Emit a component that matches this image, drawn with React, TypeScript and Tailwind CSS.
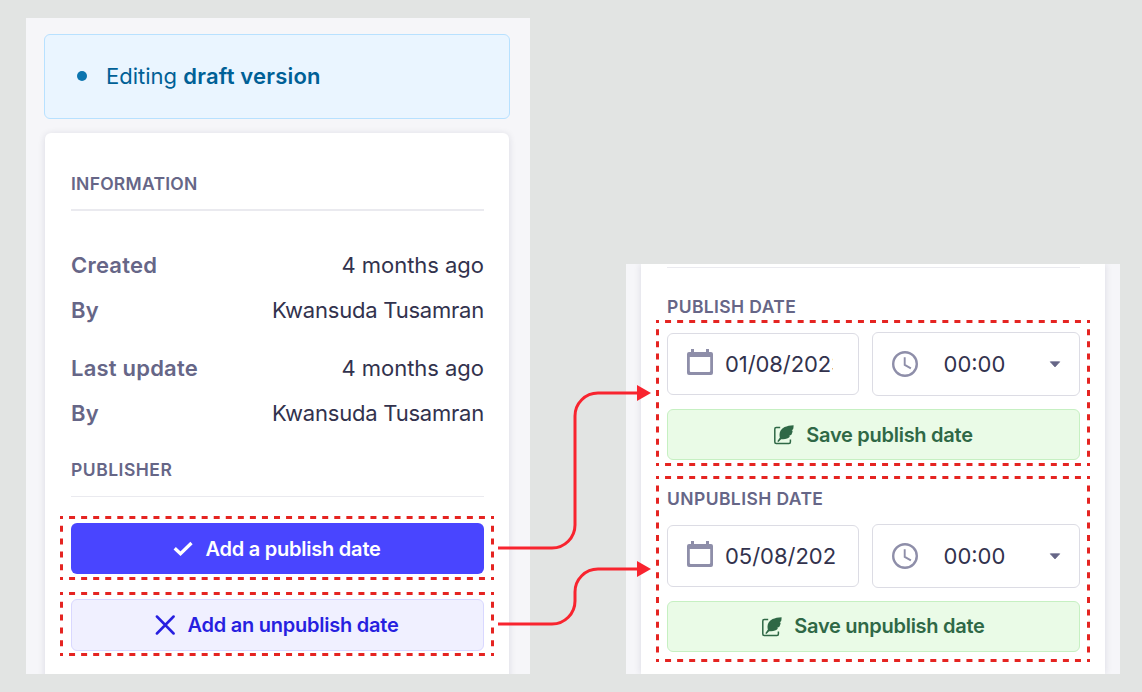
import React from "react";

function DashedBox({ w, h, className }: { w: number; h: number; className: string }) {
  const px = w / Math.round(w / 12);
  const py = h / Math.round(h / 12 - 0.01);
  const dx = `6 ${px - 6}`;
  const dy = `6 ${py - 6}`;
  return (
    <svg width={w} height={h} viewBox={`0 0 ${w} ${h}`} className={`pointer-events-none absolute ${className}`} stroke="#e52421" strokeWidth="3" fill="none">
      <path d={`M0 1.5H${w}`} strokeDasharray={dx} strokeDashoffset="3" />
      <path d={`M0 ${h - 1.5}H${w}`} strokeDasharray={dx} strokeDashoffset="3" />
      <path d={`M1.5 0V${h}`} strokeDasharray={dy} strokeDashoffset="3" />
      <path d={`M${w - 1.5} 0V${h}`} strokeDasharray={dy} strokeDashoffset="3" />
    </svg>
  );
}

const Calendar = () => (
  <svg width="26" height="26" viewBox="0 0 26 26" className="block shrink-0">
    <path fill="#8e8ea9" fillRule="evenodd" d="M4 0h3v3h12V0h3v3h2a2 2 0 0 1 2 2v19a2 2 0 0 1-2 2H2a2 2 0 0 1-2-2V5a2 2 0 0 1 2-2h2V0ZM2.8 8v13.800c0 .8.5 1.3 1.3 1.300h17.800c.8 0 1.3-.5 1.3-1.300V8H2.800Z" />
  </svg>
);

const Clock = () => (
  <svg width="26" height="26" viewBox="0 0 26 26" fill="none" stroke="#8e8ea9" className="block shrink-0">
    <circle cx="13" cy="13" r="11.8" strokeWidth="2.4" />
    <path d="M12.7 6.3v7.600l6.200 3.500" strokeWidth="1.9" />
  </svg>
);

const Feather = () => (
  <svg width="20" height="20" viewBox="0 0 20 20" className="block shrink-0">
    <path d="M6.200 2.500H2.200Q.8 2.500.8 3.900v13q0 1.500 1.400 1.500h12.800q1.400 0 1.400-1.500v-2.400" fill="none" stroke="#2f6846" strokeWidth="1.5" />
    <path d="M19.600.2C16 .4 13 1 10.600 2.100 7.200 3.800 5.600 6.500 5.500 9.500c0 1.200.1 2.200.4 3L3.300 16.200l1.100.8 2.700-2.800c3.700.6 6.900-.4 8.900-2.600l-1-.5 2.400-1.400c.8-1.500 1.200-2.800 1.300-3.900l-1-.3 1.500-1.500c.3-1.200.4-2.300.4-3.800Z" fill="#2f6846" />
  </svg>
);

const Info = ({ label, value }: { label: string; value: string }) => (
  <div className="flex h-[27px] items-center justify-between text-[22px] leading-[27px]">
    <span className="font-semibold tracking-[0.210px] text-[#666687]">{label}</span>
    <span className={value.startsWith("K") ? "tracking-[-0.220px] text-[#32324d]" : "tracking-[-0.030px] text-[#32324d]"}>{value}</span>
  </div>
);

function DateFields({ date }: { date: string }) {
  return (
    <div className="flex h-16 items-center gap-[13px] text-[22px] text-[#32324d]">
      <div className="flex h-[62px] w-48 items-center rounded-md border border-[#dcdce4] bg-white pl-[19px]">
        <div className="-mt-1"><Calendar /></div>
        <span className={date.length > 9 ? "ml-3 w-[108px] overflow-hidden whitespace-nowrap tracking-[-0.080px]" : "ml-3 whitespace-nowrap tracking-[-0.020px]"}>{date}</span>
      </div>
      <div className="flex h-16 w-52 items-center rounded-md border border-[#dcdce4] bg-white px-[19px]">
        <Clock />
        <span className="ml-[25.500px]">00:00</span>
        <svg width="12" height="7" viewBox="0 0 12 7" className="-mr-px ml-auto"><path d="M1.300.8h9.400L6 5.900Z" fill="#666687" stroke="#666687" strokeWidth=".8" strokeLinejoin="round" /></svg>
      </div>
    </div>
  );
}

const SaveButton = ({ children }: { children: string }) => (
  <button className="flex h-[51px] w-[413px] items-center justify-center rounded-md border border-[#c6f0c2] bg-[#eafbe7] text-[20px] font-semibold tracking-[-0.270px] text-[#2f6846]">
    <Feather />
    <span className="ml-3">{children}</span>
  </button>
);

export default function App() {
  return (
    <main className="relative flex h-[692px] w-[1142px] overflow-hidden bg-[#e2e4e3] pl-[26px] pt-[18px] font-['Inter','Liberation_Sans',sans-serif]">
      <section className="h-[656px] w-[504px] overflow-hidden bg-[#f6f6f9] pl-[18px] pt-4">
        <div className="flex h-[85px] w-[466px] items-center rounded-md border border-[#b8e1ff] bg-[#eaf5ff] pl-8 text-[22px] text-[#006096]">
          <span className="-mt-px mr-[19px] h-[10px] w-[10px] rounded-full bg-[#0c75af]" />
          <span>Editing <b className="font-semibold tracking-[0.200px]">draft version</b></span>
        </div>
        <div className="ml-px mt-[14px] h-[560px] w-[464px] rounded-md bg-white pl-[26px] pr-[25px] shadow-[0_1px_7px_rgba(33,33,70,0.13)]">
          <h2 className="pt-[41px] text-[17.500px] font-semibold leading-5 tracking-[0.250px] text-[#666687]">INFORMATION</h2>
          <hr className="mt-[15px] border-0 border-t-2 border-[#eaeaef]" />
          <div className="mt-[41px]"><Info label="Created" value="4 months ago" /></div>
          <div className="mt-[18px]"><Info label="By" value="Kwansuda Tusamran" /></div>
          <div className="mt-[31px]"><Info label="Last update" value="4 months ago" /></div>
          <div className="mt-[18px]"><Info label="By" value="Kwansuda Tusamran" /></div>
          <h2 className="mt-[33px] text-[17.500px] font-semibold leading-5 tracking-[0.500px] text-[#666687]">PUBLISHER</h2>
          <hr className="mt-4 border-0 border-t border-[#eaeaef]" />
          <button className="mt-[26px] flex h-[51px] w-[413px] items-center justify-center rounded-md bg-[#4945ff] pr-px text-[20px] font-semibold tracking-[-0.230px] text-white">
            <svg width="20" height="16" viewBox="0 0 20 16" className="mr-3"><path d="m1.700 7.200 5.800 5.600L18.500 2" fill="none" stroke="currentColor" strokeWidth="3.300" /></svg>
            Add a publish date
          </button>
          <button className="mt-[25px] flex h-[52px] w-[413px] items-center justify-center rounded-md border border-[#d9d8ff] bg-[#f0f0ff] pr-px text-[20px] font-semibold tracking-[-0.240px] text-[#271fe0]">
            <svg width="20" height="20" viewBox="0 0 20 20" className="mr-3"><path d="m1.900 1.500 16.700 17m0-17L1.900 18.500" stroke="currentColor" strokeWidth="2.500" strokeLinecap="round" /></svg>
            Add an unpublish date
          </button>
        </div>
      </section>

      <section className="ml-24 mt-[246px] h-[410px] w-[494px] overflow-hidden bg-[#f6f6f9] pl-[15px]">
        <div className="h-[410px] w-[464px] bg-white pl-[26px] pr-[25px] pt-[3px] shadow-[0_0_7px_rgba(33,33,70,0.13)]">
          <hr className="border-0 border-t border-[#eaeaef]" />
          <h2 className="mt-[29px] text-[17.500px] font-semibold leading-5 tracking-[0.380px] text-[#666687]">PUBLISH DATE</h2>
          <div className="mt-[15px]"><DateFields date="01/08/2023" /></div>
          <div className="mt-[13px]"><SaveButton>Save publish date</SaveButton></div>
          <h2 className="mt-[29px] text-[17.500px] font-semibold leading-5 tracking-[0.400px] text-[#666687]">UNPUBLISH DATE</h2>
          <div className="mt-[15px]"><DateFields date="05/08/202" /></div>
          <div className="mt-[13px] [&_span]:-mt-0.5"><SaveButton>Save unpublish date</SaveButton></div>
        </div>
      </section>

      <DashedBox w={434} h={64} className="left-[60px] top-[516px]" />
      <DashedBox w={434} h={64} className="left-[60px] top-[592px]" />
      <DashedBox w={434} h={146} className="left-[656px] top-[320px]" />
      <DashedBox w={434} h={186} className="left-[656px] top-[476px]" />
      <svg width="154" height="242" viewBox="498 384 154 242" className="pointer-events-none absolute left-[498px] top-[384px]">
        <g fill="none" stroke="#f8242f" strokeWidth="3">
          <path d="M498 548h54a23 23 0 0 0 23-23V416a23 23 0 0 1 23-23h40" />
          <path d="M498 624h54a23 23 0 0 0 23-23v-9a23 23 0 0 1 23-23h40" />
        </g>
        <path d="M637 385v16l14-8Zm0 176v16l14-8Z" fill="#f8242f" />
      </svg>
    </main>
  );
}
